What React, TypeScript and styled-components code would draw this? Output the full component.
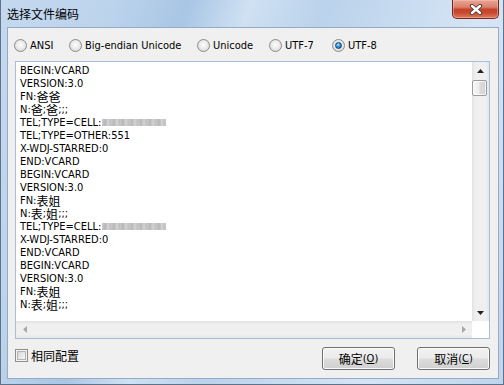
import React from "react";
import styled, { createGlobalStyle } from "styled-components";

const Global = createGlobalStyle`
  html, body { margin: 0; padding: 0; background: #ffffff; }
  body { width: 504px; height: 385px; overflow: hidden; }
  * { box-sizing: border-box; }
`;

const UI_FONT = `"DejaVu Sans Condensed", "Liberation Sans", "Noto Sans CJK SC", sans-serif`;
const CJK_FONT = `"Noto Sans CJK SC", "Liberation Sans", sans-serif`;

const Window = styled.div`
  width: 504px;
  height: 385px;
  display: flex;
  flex-direction: column;
  padding: 0 4px 6px 6px;
  border: 1px solid #5f7288;
  border-top: none;
  background:
    linear-gradient(108deg,
      #c4d9ef 0%, #bcd3ec 18%, #a9c6e5 30%, #cfe1f3 40%,
      #bad2eb 52%, #c7dbf0 64%, #d6e5f5 78%, #bfd5ed 100%);
`;

const TitleBar = styled.div`
  height: 27px;
  display: flex;
  align-items: flex-start;
  justify-content: space-between;
`;

const TitleText = styled.div`
  font-family: ${CJK_FONT};
  font-size: 12px;
  line-height: 27px;
  color: #000;
`;

const CloseButton = styled.div`
  width: 47px;
  height: 19px;
  display: flex;
  align-items: center;
  justify-content: center;
  border: 1px solid #6e2a22;
  border-top: none;
  border-radius: 0 0 5px 5px;
  background: linear-gradient(to bottom,
    #e9a898 0%, #dc7e69 40%, #c4432c 52%, #c8492f 70%, #e07a5c 100%);
  box-shadow: inset 0 0 0 1px rgba(255, 200, 180, 0.45);
`;

const Client = styled.div`
  flex: 1;
  display: flex;
  flex-direction: column;
  border: 1px solid #95abc3;
  background: #f0f0f0;
  padding: 11px 8px 8px 6px;
`;

const RadioRow = styled.div`
  display: flex;
  align-items: center;
  height: 13px;
`;

const RadioItem = styled.label<{ $w?: number }>`
  display: flex;
  align-items: center;
  gap: 3px;
  width: ${(p) => (p.$w ? `${p.$w}px` : "auto")};
  flex: none;
  font-family: ${UI_FONT};
  font-size: 11px;
  color: #000;
  white-space: nowrap;
`;

const RadioCircle = styled.span`
  width: 13px;
  height: 13px;
  flex: none;
  border-radius: 50%;
  border: 1px solid #8b8b8b;
  background: radial-gradient(circle at 50% 45%, #fdfdfd 0%, #ececec 45%, #cdcdcd 100%);
  display: flex;
  align-items: center;
  justify-content: center;
`;

const RadioDot = styled.span`
  width: 7px;
  height: 7px;
  border-radius: 50%;
  border: 1px solid #153f6d;
  background: radial-gradient(circle at 40% 35%, #b9ecff 0%, #3a9be8 40%, #0d4f98 100%);
`;

const TextBox = styled.div`
  margin: 9px 0 0 1px;
  width: 475px;
  height: 278px;
  border: 1px solid #a7c0da;
  background: #fff;
  display: grid;
  grid-template-columns: 1fr 17px;
  grid-template-rows: 1fr 17px;
`;

const TextContent = styled.div`
  padding: 2px 0 0 4px;
  overflow: hidden;
  font-family: ${UI_FONT};
  font-size: 11px;
  line-height: 13px;
  color: #000;
  white-space: pre;
`;

const Line = styled.div`
  height: 13px;
  display: flex;
  align-items: center;
`;

const Cjk = styled.span`
  font-family: ${CJK_FONT};
  font-size: 12px;
  line-height: 13px;
`;

const Redacted = styled.span<{ $w: number }>`
  display: inline-block;
  width: ${(p) => p.$w}px;
  height: 7px;
  margin-left: 1px;
  background: repeating-linear-gradient(90deg, #c9c9c9 0px, #b7b7b7 3px, #d3d3d3 6px, #bdbdbd 9px);
  filter: blur(0.7px);
`;

const VScroll = styled.div`
  display: flex;
  flex-direction: column;
  background: linear-gradient(to right, #e2e2e2 0%, #efefef 20%, #f0f0f0 80%, #e6e6e6 100%);
`;

const HScroll = styled.div`
  display: flex;
  align-items: center;
  justify-content: space-between;
  background: linear-gradient(to bottom, #e2e2e2 0%, #efefef 20%, #f0f0f0 80%, #e6e6e6 100%);
`;

const Corner = styled.div`
  background: #ffffff;
`;

const ArrowCell = styled.div`
  width: 17px;
  height: 17px;
  flex: none;
  display: flex;
  align-items: center;
  justify-content: center;
`;

const Track = styled.div`
  flex: 1;
  padding: 1px 1px 0 0;
`;

const Thumb = styled.div`
  width: 15px;
  height: 16px;
  border: 1px solid #9a9a9a;
  border-radius: 2px;
  background: linear-gradient(to right, #f6f6f6 0%, #ececec 45%, #dcdcdc 55%, #d2d2d2 100%);
  box-shadow: inset 0 0 0 1px rgba(255, 255, 255, 0.8);
`;

const BottomRow = styled.div`
  margin-top: 8px;
  display: flex;
  align-items: flex-start;
  height: 23px;
`;

const CheckLabel = styled.label`
  flex: 1;
  margin-top: 1px;
  display: flex;
  align-items: center;
  gap: 3px;
  padding-left: 1px;
  font-family: ${CJK_FONT};
  font-size: 12px;
  line-height: 15px;
  color: #000;
`;

const CheckBox = styled.span`
  width: 13px;
  height: 13px;
  border: 1px solid #8e8e8e;
  background: #f4f4f4;
  padding: 1px;
  display: flex;
`;

const CheckInner = styled.span`
  flex: 1;
  border: 1px solid #b3b3b3;
  background: linear-gradient(135deg, #d6d6d6 0%, #e8e8e8 50%, #f7f7f7 100%);
`;

const Button = styled.button<{ $gap?: number }>`
  width: 73px;
  height: 23px;
  margin-left: ${(p) => p.$gap ?? 0}px;
  padding: 0;
  border: 1px solid #707070;
  border-radius: 3px;
  background: linear-gradient(to bottom, #f2f2f2 0%, #ebebeb 48%, #dddddd 52%, #cfcfcf 100%);
  box-shadow: inset 0 0 0 1px #fbfbfb;
  font-family: ${CJK_FONT};
  font-size: 12px;
  color: #000;
  display: flex;
  align-items: center;
  justify-content: center;
`;

const Paren = styled.span`
  font-family: ${UI_FONT};
  font-size: 11px;
`;

const Mnemonic = styled.span`
  text-decoration: underline;
  text-underline-offset: 1px;
`;

const UpArrow = ({ color }: { color: string }) => (
  <svg width="7" height="4" viewBox="0 0 7 4"><path d="M0 4 L3.5 0 L7 4 Z" fill={color} /></svg>
);
const DownArrow = ({ color }: { color: string }) => (
  <svg width="7" height="4" viewBox="0 0 7 4"><path d="M0 0 L3.5 4 L7 0 Z" fill={color} /></svg>
);
const LeftArrow = ({ color }: { color: string }) => (
  <svg width="4" height="7" viewBox="0 0 4 7"><path d="M4 0 L0 3.5 L4 7 Z" fill={color} /></svg>
);
const RightArrow = ({ color }: { color: string }) => (
  <svg width="4" height="7" viewBox="0 0 4 7"><path d="M0 0 L4 3.5 L0 7 Z" fill={color} /></svg>
);

const CloseGlyph = () => (
  <svg width="14" height="11" viewBox="0 0 14 11">
    <path d="M3 2 L11 9 M11 2 L3 9" stroke="#4a3a38" strokeWidth="4.2" strokeLinecap="round" />
    <path d="M3 2 L11 9 M11 2 L3 9" stroke="#ffffff" strokeWidth="2.4" strokeLinecap="round" />
  </svg>
);

type Part = { t: string; cjk?: boolean; redact?: number };
const P = (t: string): Part => ({ t });
const C = (t: string): Part => ({ t, cjk: true });
const R = (w: number): Part => ({ t: "", redact: w });

const lines: Part[][] = [
  [P("BEGIN:VCARD")],
  [P("VERSION:3.0")],
  [P("FN:"), C("爸爸")],
  [P("N:"), C("爸"), P(";"), C("爸"), P(";;;")],
  [P("TEL;TYPE=CELL:"), R(64)],
  [P("TEL;TYPE=OTHER:551")],
  [P("X-WDJ-STARRED:0")],
  [P("END:VCARD")],
  [P("BEGIN:VCARD")],
  [P("VERSION:3.0")],
  [P("FN:"), C("表姐")],
  [P("N:"), C("表"), P(";"), C("姐"), P(";;;")],
  [P("TEL;TYPE=CELL:"), R(64)],
  [P("X-WDJ-STARRED:0")],
  [P("END:VCARD")],
  [P("BEGIN:VCARD")],
  [P("VERSION:3.0")],
  [P("FN:"), C("表姐")],
  [P("N:"), C("表"), P(";"), C("姐"), P(";;;")],
];

const radios = [
  { label: "ANSI", w: 55 },
  { label: "Big-endian Unicode", w: 128 },
  { label: "Unicode", w: 72 },
  { label: "UTF-7", w: 63 },
  { label: "UTF-8", w: 0, checked: true },
];

export default function App() {
  return (
    <>
      <Global />
      <Window>
        <TitleBar>
          <TitleText>选择文件编码</TitleText>
          <CloseButton>
            <CloseGlyph />
          </CloseButton>
        </TitleBar>
        <Client>
          <RadioRow>
            {radios.map((r) => (
              <RadioItem key={r.label} $w={r.w || undefined}>
                <RadioCircle>{r.checked && <RadioDot />}</RadioCircle>
                {r.label}
              </RadioItem>
            ))}
          </RadioRow>
          <TextBox>
            <TextContent>
              {lines.map((parts, i) => (
                <Line key={i}>
                  {parts.map((p, j) =>
                    p.redact ? (
                      <Redacted key={j} $w={p.redact} />
                    ) : p.cjk ? (
                      <Cjk key={j}>{p.t}</Cjk>
                    ) : (
                      <span key={j}>{p.t}</span>
                    )
                  )}
                </Line>
              ))}
            </TextContent>
            <VScroll>
              <ArrowCell>
                <UpArrow color="#222" />
              </ArrowCell>
              <Track>
                <Thumb />
              </Track>
              <ArrowCell>
                <DownArrow color="#222" />
              </ArrowCell>
            </VScroll>
            <HScroll>
              <ArrowCell>
                <LeftArrow color="#a8a8a8" />
              </ArrowCell>
              <ArrowCell>
                <RightArrow color="#a8a8a8" />
              </ArrowCell>
            </HScroll>
            <Corner />
          </TextBox>
          <BottomRow>
            <CheckLabel>
              <CheckBox>
                <CheckInner />
              </CheckBox>
              相同配置
            </CheckLabel>
            <Button>
              确定<Paren>(<Mnemonic>O</Mnemonic>)</Paren>
            </Button>
            <Button $gap={22}>
              取消<Paren>(<Mnemonic>C</Mnemonic>)</Paren>
            </Button>
          </BottomRow>
        </Client>
      </Window>
    </>
  );
}
